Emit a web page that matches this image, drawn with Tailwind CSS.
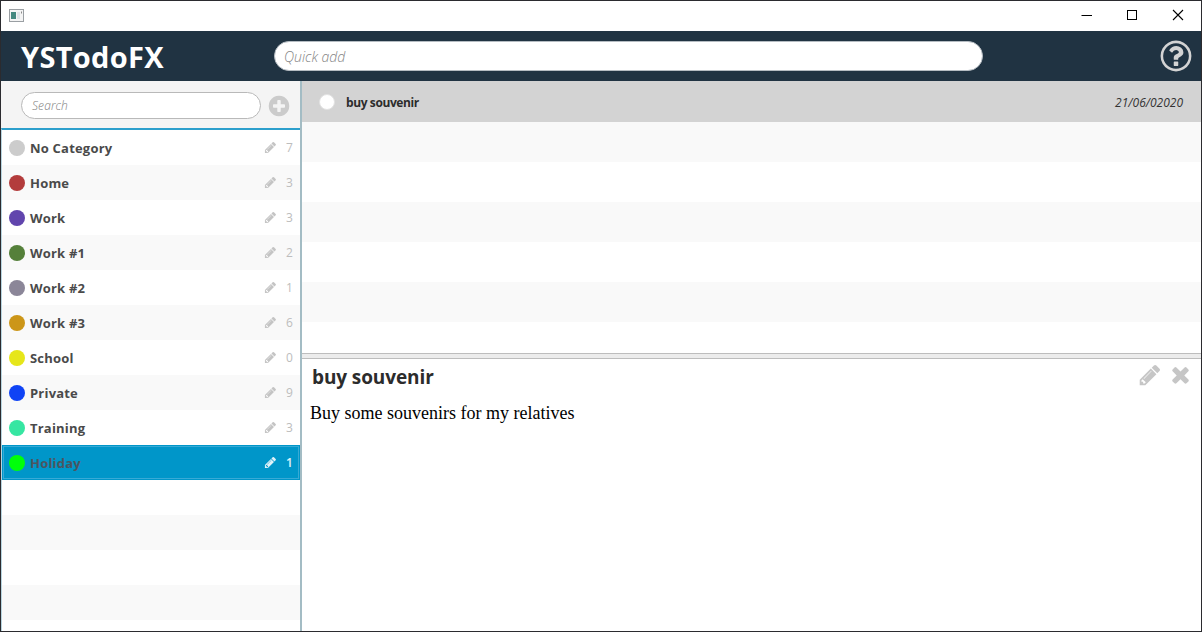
<!DOCTYPE html>
<html lang="en">
<head>
<meta charset="utf-8">
<title>YSTodoFX</title>
<script src="https://cdn.jsdelivr.net/npm/@tailwindcss/browser@4"></script>
</head>
<body class="h-[632px] w-[1202px] overflow-hidden bg-white font-['Open_Sans','Noto_Sans',sans-serif]">
<svg class="hidden">
  <symbol id="pencil" viewBox="0 0 1792 1792"><path fill-rule="evenodd" d="M491 1536l91-91-235-235-91 91v107h128v128h107zM1014 608q0-22-22-22-10 0-17 7l-542 542q-7 7-7 17 0 22 22 22 10 0 17-7l542-542q7-7 7-17zM960 416l416 416-832 832h-416v-416zM1643 512q0 53-37 90l-166 166-416-416 166-165q36-38 90-38 53 0 91 38l235 234q37 39 37 91z"/></symbol>
</svg>
<div class="flex h-full w-full flex-col border border-[#2b2b2f]">
  <div class="flex h-[30px] shrink-0 items-center bg-white pl-2">
    <svg class="-mt-0.5 size-[15px]" viewBox="0 0 15 15"><rect x=".5" y="1.5" width="14" height="12" fill="#f4f4f4" stroke="#9a9fa3"/><rect x="2" y="4" width="5" height="7" fill="#44887f"/><rect x="8" y="4" width="3" height="7" fill="#dfe3e6"/><path d="M12.5 3.500v2" stroke="#8a8a8a"/></svg>
    <div class="ml-auto flex items-center pr-[17px] pb-[2px]">
      <svg class="mr-[33px] size-3" viewBox="0 0 12 12"><path d="M.5 6.500h10.500" stroke="#000"/></svg>
      <svg class="mr-[34px] size-3" viewBox="0 0 12 12"><rect x="1.500" y="1.500" width="9" height="9" fill="none" stroke="#000"/></svg>
      <svg class="size-3" viewBox="0 0 12 12"><path d="M1 1l10 10M11 1L1 11" stroke="#000" stroke-width="1.100"/></svg>
    </div>
  </div>
  <header class="flex h-[50px] shrink-0 items-center bg-[#203342] pr-[7px] pl-5">
    <div class="w-[253px] pt-px text-[29px] leading-none font-bold tracking-[0.3px] whitespace-nowrap text-white">YSTodoFX</div>
    <div class="flex h-[30px] w-[709px] items-center rounded-full border border-[#b5bcc2] bg-white pl-[9px] text-[14px] font-light text-[#858585] italic">Quick add</div>
    <svg class="ml-auto size-9" viewBox="0 0 1792 1792" fill="#d3d3d3"><path d="M1008 1200v160q0 14-9 23t-23 9h-160q-14 0-23-9t-9-23v-160q0-14 9-23t23-9h160q14 0 23 9t9 23zm256-496q0 50-15 90t-45.500 69-52 44-59.500 36q-32 18-46.500 28t-26 24-11.500 29v32q0 14-9 23t-23 9h-160q-14 0-23-9t-9-23v-68q0-35 10.500-64.500t24-47.500 39-35.500 41-25.500 44.500-21q53-25 75-43t22-49q0-42-43.500-71.500t-95.500-29.500q-56 0-95 27-29 20-80 83-9 12-25 12-11 0-19-6l-108-82q-10-7-12-20t5-23q122-192 349-192 129 0 238.500 89.500t109.500 214.500zm-368-448q-130 0-248.500 51t-204 136.500-136.500 204-51 248.500 51 248.500 136.500 204 204 136.500 248.500 51 248.500-51 204-136.500 136.500-204 51-248.500-51-248.500-136.500-204-204-136.500-248.500-51zm768 640q0 209-103 385.500t-279.500 279.500-385.500 103-385.500-103-279.500-279.500-103-385.500 103-385.500 279.500-279.500 385.500-103 385.500 103 279.500 279.500 103 385.500z"/></svg>
  </header>
  <div class="flex min-h-0 flex-1">
    <aside class="flex w-[301px] shrink-0 flex-col border-r-2 border-[#a3bcc4]">
      <div class="flex h-[47px] shrink-0 items-center bg-[#f4f4f4] pt-px pl-5">
        <div class="flex h-[27px] w-60 items-center rounded-full border border-[#b9b9b9] bg-white pt-[2px] pl-[10px] text-[12px] font-light tracking-[0.1px] text-[#808080] italic">Search</div>
        <svg class="mt-px ml-[6px] size-6" viewBox="0 0 1792 1792" fill="#cbcbcb"><path d="M1344 960v-128q0-26-19-45t-45-19h-256v-256q0-26-19-45t-45-19h-128q-26 0-45 19t-19 45v256h-256q-26 0-45 19t-19 45v128q0 26 19 45t45 19h256v256q0 26 19 45t45 19h128q26 0 45-19t19-45v-256h256q26 0 45-19t19-45zM1664 896q0 209-103 385.500t-279.500 279.500-385.500 103-385.500-103-279.500-279.500-103-385.500 103-385.500 279.500-279.500 385.500-103 385.500 103 279.500 279.500 103 385.500z"/></svg>
      </div>
      <div id="categories" class="min-h-0 flex-1 overflow-hidden border-t-2 border-l border-t-[#2c9fcc] border-l-[#b8d5e0]"></div>
    </aside>
    <main class="flex min-w-0 flex-1 flex-col">
      <div class="h-[272px] shrink-0 overflow-hidden">
        <div class="flex h-[41px] items-center bg-[#d3d3d3] pr-[18px] pl-[17px]">
          <div class="size-4 rounded-full border border-[#e2e2e2] bg-white"></div>
          <div class="ml-[11px] pt-[2px] text-[12px] font-bold tracking-[-0.4px] text-[#2c2c2c]">buy souvenir</div>
          <div class="ml-auto pt-[2px] text-[12px] text-[#333] italic">21/06/02020</div>
        </div>
        <div class="h-10 bg-[#f9f9f9]"></div><div class="h-10"></div>
        <div class="h-10 bg-[#f9f9f9]"></div><div class="h-10"></div>
        <div class="h-10 bg-[#f9f9f9]"></div><div class="h-10"></div>
      </div>
      <div class="h-[6px] shrink-0 border-y border-[#bdbdbd] bg-[#ececec]"></div>
      <div class="flex h-[35px] shrink-0 items-center pr-2 pl-[10px]">
        <h1 class="pt-px text-[19px] leading-none font-bold tracking-[-0.1px] text-[#2c2c2c]">buy souvenir</h1>
        <div class="ml-auto flex items-center gap-[6px] pb-[4px] text-[#c6c6c6]">
          <svg class="size-6" fill="currentColor"><use href="#pencil"/></svg>
          <svg class="size-[25px]" viewBox="0 0 1792 1792" fill="currentColor"><path d="M1490 1322q0 40-28 68l-136 136q-28 28-68 28t-68-28l-294-294-294 294q-28 28-68 28t-68-28l-136-136q-28-28-28-68t28-68l294-294-294-294q-28-28-28-68t28-68l136-136q28-28 68-28t68 28l294 294 294-294q28-28 68-28t68 28l136 136q28 28 28 68t-28 68l-294 294 294 294q28 28 28 68z"/></svg>
        </div>
      </div>
      <p class="pt-2 pl-2 font-['Liberation_Serif',serif] text-[18px] leading-[22px] text-black">Buy some souvenirs for my relatives</p>
    </main>
  </div>
</div>
<script>
const categories = [
  ['No Category', 7, '#cccccc'], ['Home', 3, '#b33c3c'], ['Work', 3, '#6145ad'], ['Work #1', 2, '#55803a'],
  ['Work #2', 1, '#8b8698'], ['Work #3', 6, '#cc9618'], ['School', 0, '#e6e61a'], ['Private', 9, '#0f43f5'],
  ['Training', 3, '#36e6a2'], ['Holiday', 1, '#00ff0a']
];
let html = '';
for (let i = 0; i < 15; i++) {
  const c = categories[i];
  const bg = i === 9 ? 'bg-[#0096c9] outline outline-1 -outline-offset-2 outline-[#37aad6]' : i % 2 ? 'bg-[#f9f9f9]' : 'bg-white';
  html += `<div class="flex h-[35px] items-center pl-[7px] pr-[7px] ${bg}">`;
  if (c) html += `<span class="size-4 shrink-0 rounded-full" style="background:${c[2]}"></span>
    <span class="ml-[5px] pt-[2px] text-[13px] font-bold tracking-[0.2px] ${i === 9 ? 'text-[#4c5560]' : 'text-[#4a4a4a]'}">${c[0]}</span>
    <svg class="ml-auto size-[13px] ${i === 9 ? 'text-[#e0f2f9]' : 'text-[#c4c4c4]'}" fill="currentColor"><use href="#pencil"/></svg>
    <span class="ml-[9px] w-[7px] pt-px text-[12px] ${i === 9 ? 'font-semibold text-[#e0f2f9]' : 'text-[#bdbdbd]'}">${c[1]}</span>`;
  html += '</div>';
}
document.getElementById('categories').innerHTML = html;
</script>
</body>
</html>
